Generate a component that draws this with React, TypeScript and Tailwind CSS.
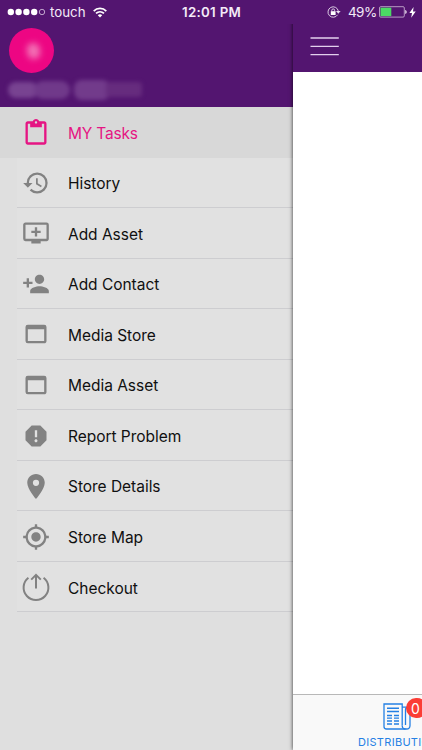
import type { ReactNode } from "react";
import {
  MdAddToQueue,
  MdContentPaste,
  MdHistory,
  MdMyLocation,
  MdPersonAdd,
  MdPlace,
  MdReport,
  MdWebAsset,
} from "react-icons/md";

function CheckoutIcon() {
  return (
    <svg width="28" height="28" viewBox="0 0 28 28" fill="none" stroke="currentColor" strokeWidth="2">
      <path d="M6.4 4.8A12.4 12.4 0 1 0 21.6 4.8" />
      <path d="M14 15.5V2.6" />
      <path d="M9.2 6.6L14 1.9L18.8 6.6" />
    </svg>
  );
}

const items: { label: string; icon: ReactNode }[] = [
  { label: "History", icon: <MdHistory size={28} /> },
  { label: "Add Asset", icon: <MdAddToQueue size={28} /> },
  { label: "Add Contact", icon: <MdPersonAdd size={28} /> },
  { label: "Media Store", icon: <MdWebAsset size={28} /> },
  { label: "Media Asset", icon: <MdWebAsset size={28} /> },
  { label: "Report Problem", icon: <MdReport size={28} /> },
  { label: "Store Details", icon: <MdPlace size={31} /> },
  { label: "Store Map", icon: <MdMyLocation size={28} /> },
  { label: "Checkout", icon: <CheckoutIcon /> },
];

function StatusBar() {
  return (
    <div className="absolute inset-x-0 top-0 z-20 flex h-6 items-center bg-[#531570] text-[#f4eaf8]">
      <svg width="40" height="8" viewBox="0 0 40 8" className="ml-[7px]">
        <g fill="#fff">
          <circle cx="3.8" cy="4" r="3.2" />
          <circle cx="11.6" cy="4" r="3.2" />
          <circle cx="19.4" cy="4" r="3.2" />
          <circle cx="27.2" cy="4" r="3.2" />
        </g>
        <circle cx="35" cy="4" r="2.7" fill="none" stroke="#d9c6e2" strokeWidth="0.8" />
      </svg>
      <span className="ml-[3px] w-[36px] pt-px text-[13.3px] whitespace-nowrap">touch</span>
      <svg width="14" height="11" viewBox="0 0 14 11" className="ml-[7px]" fill="none" stroke="#fff" strokeWidth="1.7">
        <path d="M0.7 4.1C4.2 0.5 9.8 0.5 13.3 4.1" />
        <path d="M3 6.4C5.3 4.2 8.7 4.2 11 6.4" />
        <path d="M4.8 8.2C6 7 8 7 9.2 8.2L7 10.5Z" fill="#fff" stroke="none" />
      </svg>
      <span className="ml-[75px] w-[62px] pt-px text-[13.3px] font-semibold tracking-[0.3px] whitespace-nowrap">12:01 PM</span>
      <svg width="14" height="12" viewBox="0 0 14 12" className="ml-[83px]" fill="none" stroke="#eadff0">
        <path d="M10.6 8.8A5.2 5.2 0 1 1 11.3 5" strokeWidth="0.9" />
        <path d="M9 5H13.6L11.3 7.8Z" fill="#eadff0" stroke="none" />
        <rect x="3.8" y="5.2" width="4.8" height="3.8" fill="#fff" stroke="none" />
        <path d="M4.8 5.4V4.3A1.4 1.4 0 0 1 7.6 4.3V5.4" strokeWidth="0.9" />
      </svg>
      <span className="ml-[7px] w-[28px] pt-px text-[13.5px] tracking-[-0.6px] whitespace-nowrap">49%</span>
      <svg width="28" height="12" viewBox="0 0 28 12" className="ml-[3px]">
        <rect x="0.5" y="0.7" width="24.8" height="10.4" rx="1.2" fill="none" stroke="#c4aace" strokeWidth="0.9" />
        <rect x="1.5" y="1.7" width="10.8" height="8.4" fill="#4bd964" />
        <path d="M26.2 4C28.2 4.4 28.2 7.4 26.2 7.8Z" fill="#e6d9eb" />
      </svg>
      <svg width="7" height="11" viewBox="0 0 7 11" className="ml-[2px]">
        <path d="M4.6 0L0.4 6H3L2.2 10.8L6.7 4.5H4Z" fill="#fff" />
      </svg>
    </div>
  );
}

function Drawer() {
  return (
    <aside className="h-full w-[293px] shrink-0 overflow-hidden bg-[#dfdfdf]">
      <header className="flex h-[107px] flex-col bg-[#531570] pt-[28px]">
        <div className="ml-[9px] flex size-[45px] items-center justify-center rounded-full bg-[#ed0683]">
          <div className="ml-[4px] h-[16px] w-[13px] rotate-[-12deg] rounded-md bg-[#f59ac8]/70 blur-[3px]" />
        </div>
        <div className="mt-[6px] ml-[8px] flex h-[21px] items-center blur-[2px]">
          <div className="h-[16px] w-[30px] rounded-[8px] bg-[#784391]" />
          <div className="-ml-[4px] h-[18px] w-[36px] rounded-[9px] bg-[#70398a]" />
          <div className="ml-[4px] h-[20px] w-[36px] rounded-[8px] bg-[#723b8b]" />
          <div className="-ml-[4px] h-[15px] w-[36px] rounded-[4px] bg-[#662c7e]" />
        </div>
      </header>
      <nav>
        <div className="flex h-[50.5px] items-center bg-[#d8d8d8] pt-px pl-[22px] text-[#e51583]">
          <MdContentPaste size={28} />
          <span className="ml-[18px] pt-px text-[15.5px] tracking-[-0.2px]">MY Tasks</span>
        </div>
        {items.map((item) => (
          <div key={item.label} className="ml-[17px] flex h-[50.55px] items-center border-b border-[#cdcdd0] bg-[#e1e1e1] text-[#828282]">
            <span className="ml-[4px] flex w-[30px] justify-center pt-px">{item.icon}</span>
            <span className="ml-[17px] pt-[3px] text-[15.5px] tracking-[-0.03px] text-[#101010]">{item.label}</span>
          </div>
        ))}
      </nav>
    </aside>
  );
}

function MainPage() {
  return (
    <main className="relative flex h-full w-[129px] shrink-0 flex-col bg-white shadow-[0_0_4px_0_rgba(0,0,0,0.8)]">
      <header className="h-[72px] bg-[#531570] pt-[36px]">
        <svg width="29" height="21" viewBox="0 0 29 21" className="ml-[17px]" stroke="#e3cfed" strokeWidth="1.3">
          <path d="M0.5 2H28.8M0.5 10.3H28.8M0.5 18.7H28.8" />
        </svg>
      </header>
      <div className="flex-1" />
      <footer className="relative flex h-[56px] flex-col overflow-hidden border-t border-[#b8b8b8] bg-[#f9f9f9] text-[#2480e4]">
        <svg width="28" height="28" viewBox="0 0 28 28" className="mt-[8px] ml-[90px]" fill="none" stroke="currentColor" strokeWidth="1.3">
          <path d="M19.2 22.5V1H1V23.5Q1 26 3.5 26H23.5Q27 26 27 22.5V7Q27 4.2 24.2 4.2H19.2" />
          <path d="M19.2 22.5Q19.2 26 22.5 26" />
          <path d="M22.5 22V7Q22.5 4.4 24.8 4.4" />
          <path d="M4 5.2H16M4 8.4H16" strokeWidth="1.5" />
          <path d="M4 12.5H9M4 15.2H9M4 18H9M4 21H9M11 12.5H16M11 15.2H16M11 18H16M11 21H16" strokeWidth="1.3" />
        </svg>
        <span className="mt-[4px] ml-[65px] text-[11px] leading-[14px] tracking-[0.3px] whitespace-nowrap">DISTRIBUTION</span>
        <span className="absolute top-[3px] left-[113px] flex h-[20px] w-[21px] items-center rounded-full bg-[#fb3d35] pl-[5px] text-[14px] text-white">0</span>
      </footer>
    </main>
  );
}

export default function App() {
  return (
    <div className="relative flex h-[750px] w-[422px] overflow-hidden bg-white font-['Inter','Liberation_Sans',sans-serif]">
      <Drawer />
      <MainPage />
      <StatusBar />
    </div>
  );
}
